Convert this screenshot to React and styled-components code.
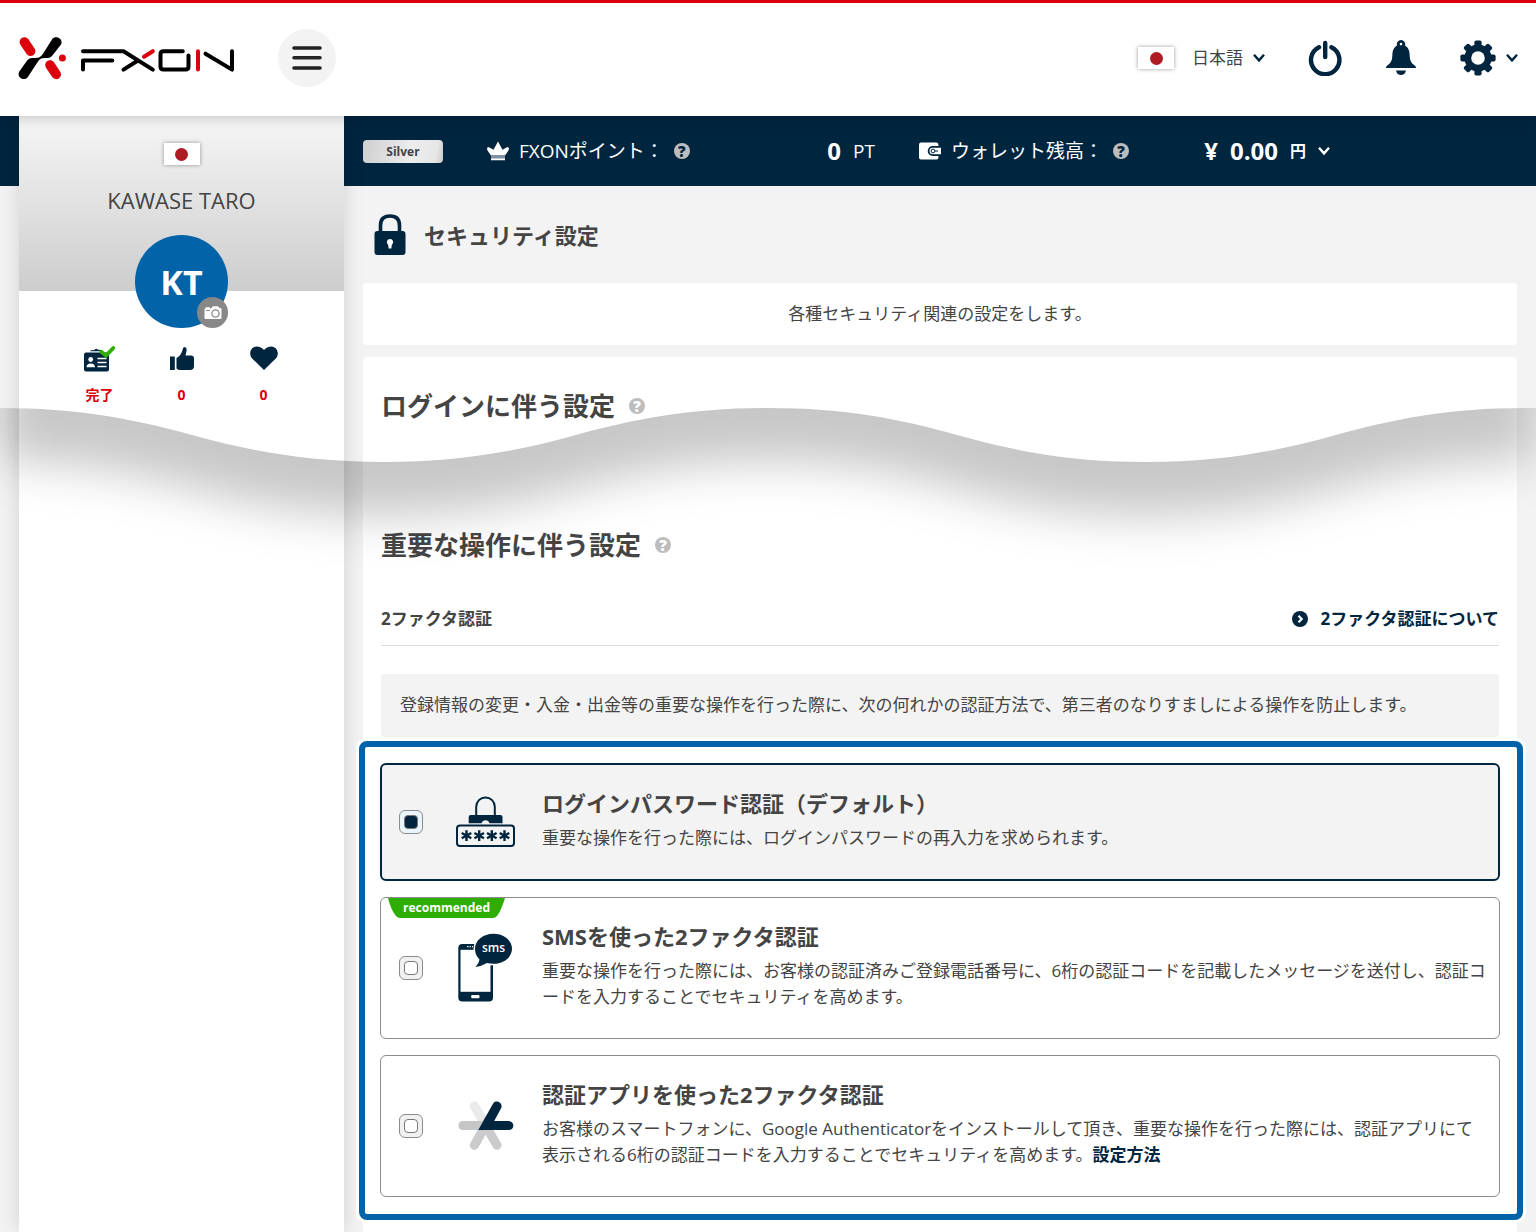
import React, { useState } from "react";
import styled, { createGlobalStyle } from "styled-components";

const navy = "#00253f";
const text = "#444444";
const red = "#dc000c";
const blue = "#0363a9";
const pale = "#f3f3f3";

const GlobalStyle = createGlobalStyle`
  *, *::before, *::after { box-sizing: border-box; }
  body {
    margin: 0;
    background: ${pale};
    color: ${text};
    font-family: "Open Sans", "Noto Sans CJK JP", sans-serif;
    font-size: 17px;
    line-height: 26px;
  }
  h1, h2, h3, p { margin: 0; }
  svg { display: block; flex: none; }
  button {
    border: 0;
    padding: 0;
    background: none;
    color: inherit;
    font: inherit;
    cursor: pointer;
  }
`;

const Page = styled.div`
  position: relative;
  display: flex;
  flex-direction: column;
  min-height: 100vh;
  overflow: hidden;
`;

const Header = styled.header`
  position: relative;
  z-index: 2;
  display: flex;
  align-items: center;
  height: 116px;
  padding: 0 18px 3px;
  border-top: 3px solid ${red};
  background: #fff;
  box-shadow: 0 2px 12px rgba(0, 0, 0, 0.2);
`;

const MenuButton = styled.button`
  display: grid;
  place-items: center;
  width: 58px;
  height: 58px;
  margin-left: 42px;
  border-radius: 50%;
  background: ${pale};
`;

const HeaderTools = styled.div`
  display: flex;
  align-items: center;
  gap: 43px;
  margin-left: auto;
  color: ${navy};
`;

const Language = styled.label`
  display: flex;
  align-items: center;
  gap: 18px;
`;

const SelectWrap = styled.span`
  position: relative;
  display: block;

  svg {
    position: absolute;
    right: 0;
    top: 9px;
    pointer-events: none;
  }
`;

const LanguageSelect = styled.select`
  appearance: none;
  display: block;
  height: 28px;
  padding: 0 22px 0 0;
  border: 0;
  background: none;
  color: ${text};
  font: inherit;
`;

const IconButton = styled.button`
  display: flex;
  align-items: center;
  gap: 10px;
`;

const FlagBox = styled.span`
  display: grid;
  place-items: center;
  width: 36px;
  height: 22px;
  background: #fff;
  box-shadow: 0 0 4px rgba(0, 0, 0, 0.4);

  &::before {
    content: "";
    width: 13px;
    height: 13px;
    border-radius: 50%;
    background: #ae1b22;
  }
`;

const Body = styled.div`
  flex: 1;
  display: flex;
  gap: 19px;
  padding: 0 19px;
  background: linear-gradient(${navy} 70px, ${pale} 70px);
`;

const Sidebar = styled.aside`
  flex: none;
  display: flex;
  flex-direction: column;
  align-items: center;
  width: 325px;
  padding-top: 27px;
  background: linear-gradient(#f6f6f6, #cdcdcd) 0 0 / 100% 175px no-repeat #fff;
  box-shadow: 0 0 20px rgba(0, 0, 0, 0.14);
`;

const UserName = styled.p`
  margin: 20px 0;
  font-size: 22px;
  line-height: 30px;
`;

const Avatar = styled.div`
  position: relative;
  display: grid;
  place-items: center;
  width: 93px;
  height: 93px;
  border-radius: 50%;
  background: ${blue};
  color: #fff;
  font-size: 34px;
  font-weight: 700;
`;

const CameraButton = styled.button`
  position: absolute;
  right: 0;
  bottom: 0;
  display: grid;
  place-items: center;
  width: 31px;
  height: 31px;
  border-radius: 50%;
  background: #888;
`;

const Stats = styled.div`
  display: grid;
  grid-template-columns: repeat(3, 82px);
  margin-top: 18px;
`;

const Stat = styled.div`
  display: flex;
  flex-direction: column;
  align-items: center;
  gap: 13px;
  color: ${red};
  font-size: 14px;
  font-weight: 700;
  line-height: 20px;
`;

const Main = styled.main`
  flex: 1;
  min-width: 0;
  display: flex;
  flex-direction: column;
`;

const AccountBar = styled.div`
  display: flex;
  align-items: center;
  gap: 44px;
  height: 70px;
  color: #fff;
  font-size: 19px;
`;

const RankButton = styled.button`
  width: 80px;
  height: 23px;
  border-radius: 4px;
  background: linear-gradient(100deg, #cfcfcf, #ededed 60%, #e6e6e6 90%, #c8c8c8);
  color: ${text};
  font-size: 12px;
  font-weight: 700;
  line-height: 23px;
`;

const Balance = styled.div`
  display: flex;
  align-items: center;
  justify-content: space-between;
  width: ${(p) => p.$width};
`;

const BalanceLabel = styled.span`
  display: flex;
  align-items: center;
  gap: 10px;
`;

const BalanceValue = styled.span`
  display: flex;
  align-items: center;
  gap: 12px;
`;

const CurrencyButton = styled.button`
  display: flex;
  align-items: center;
  gap: 12px;
  font-size: 16px;
  font-weight: 700;
`;

const Amount = styled.strong`
  font-size: 24px;
  font-weight: 700;
`;

const HelpButton = styled.button`
  display: grid;
  place-items: center;
  width: 16px;
  height: 16px;
  border-radius: 50%;
  background: #bdbdbd;
  color: ${(p) => p.$ink};
  font-size: 15px;
  font-weight: 800;
  line-height: 16px;
`;

const PageTitle = styled.h1`
  display: flex;
  align-items: center;
  gap: 18px;
  height: 97px;
  padding-left: 11px;
  font-size: 22px;
  line-height: 32px;
`;

const Intro = styled.p`
  padding: 18px;
  border-radius: 4px;
  background: #fff;
  text-align: center;
`;

const Panel = styled.section`
  flex: 1;
  margin-top: 12px;
  padding: 30px 18px 12px;
  border-radius: 4px 4px 0 0;
  background: #fff;
`;

const SectionTitle = styled.h2`
  display: flex;
  align-items: center;
  gap: 14px;
  margin-top: ${(p) => (p.$spaced ? "101px" : "0")};
  font-size: 26px;
  line-height: 38px;
`;

const SubHeading = styled.div`
  display: flex;
  align-items: center;
  justify-content: space-between;
  height: 54px;
  margin: 28px 0;
  border-bottom: 1px solid #dcdcdc;
`;

const SubTitle = styled.h3`
  font-size: 17px;
`;

const AboutLink = styled.a`
  display: flex;
  align-items: center;
  gap: 12px;
  color: ${navy};
  font-weight: 700;
  text-decoration: none;
`;

const Notice = styled.p`
  padding: 18px 19px 19px;
  border-radius: 4px;
  background: ${pale};
`;

const Highlight = styled.div`
  display: flex;
  flex-direction: column;
  gap: 16px;
  margin: 4px -24px 0 -22px;
  padding: 16px 17px 17px 15px;
  border: 6px solid ${blue};
  border-radius: 8px;
  background: #fff;
  box-shadow: 0 0 0 3px #fff;
`;

const Option = styled.div`
  position: relative;
  display: flex;
  align-items: center;
  padding: ${(p) => (p.$selected ? "0 11px 0 17px" : "0 12px 0 18px")};
  border: ${(p) => (p.$selected ? `2px solid ${navy}` : "1px solid #8c8c8c")};
  border-radius: 6px;
  background: ${(p) => (p.$selected ? pale : "#fff")};
`;

const Radio = styled.input`
  appearance: none;
  flex: none;
  display: grid;
  place-items: center;
  width: 24px;
  height: 24px;
  margin: 0;
  border: 1px solid #8c8c8c;
  border-radius: 6px;
  background: #f1f1f1;

  &::before {
    content: "";
    width: 14px;
    height: 14px;
    border: 1px solid #777;
    border-radius: 4px;
    background: #fff;
  }

  &:checked { background: #eaf4fb; }
  &:checked::before { background: ${navy}; }
`;

const OptionIcon = styled.span`
  flex: none;
  width: 60px;
  margin: 0 26px 0 33px;
`;

const OptionText = styled.div`
  flex: 1;
  padding: 22px 0 28px;
  line-break: loose;
`;

const OptionTitle = styled.label`
  display: block;
  margin-bottom: 6px;
  font-size: 22px;
  font-weight: 700;
  line-height: 32px;
`;

const InlineLink = styled.a`
  color: ${navy};
  font-weight: 700;
  text-decoration: none;
`;

const Badge = styled.span`
  position: absolute;
  left: 7px;
  top: 0;
  width: 117px;
  height: 20px;
  background: #2eae03;
  clip-path: path("M0 0H117Q113 13 109 18Q107 20 105 20H12Q10 20 8 18Q3 12 0 0Z");
  color: #fff;
  font-size: 12px;
  font-weight: 700;
  line-height: 20px;
  text-align: center;
`;

const Wave = styled.svg`
  position: absolute;
  left: 0;
  top: 408px;
  width: 100%;
  height: 200px;
  pointer-events: none;
`;

const Logo = () => (
  <svg width="218" height="45" viewBox="18 36 218 45" role="img" aria-label="FXON">
    <g fill="none" strokeLinecap="round" strokeWidth="9.6">
      <path d="M24.4 42L30.6 51.2M50 65L56.2 74.4" stroke={red} />
    </g>
    <circle cx="62.4" cy="58.1" r="3.5" fill={red} />
    <path d="M52.3 39C55 34.800 64 38.500 61 44.500L52 56Q50.500 58 47.500 58Q42.500 57.800 41 58.500Q38.500 60 37 63L27.700 77.300C24.500 81.500 16 77.700 19.300 71.600L27.500 60Q29.300 58 32 58Q37 58.300 39 57.600Q41 57 43.200 53.600Z" fill="#000" />
    <g fill="none" stroke="#000" strokeWidth="4" strokeLinecap="round" strokeLinejoin="round">
      <path d="M83 51.200H123.500L152.800 69.600M83 69.600V60.400H112.300M123.500 69.600L138 60.500" />
      <path d="M182.800 51.200H163.500Q160.500 51.200 160.500 54.200V66.600Q160.500 69.600 163.500 69.600H185.500Q188.500 69.600 188.500 66.600V55.500" />
      <path d="M205.500 53.700L232 69.600V51.200" />
    </g>
    <path d="M144 56.800L152.800 51.200M198 51.200V69.600" fill="none" stroke={red} strokeWidth="4" strokeLinecap="round" />
  </svg>
);

const Chevron = () => (
  <svg width="12" height="10" viewBox="0 0 12 10" fill="none" stroke="currentColor" strokeWidth="2.400">
    <path d="M1 1.800L6 7.400L11 1.800" />
  </svg>
);

const PowerIcon = () => (
  <svg width="34" height="36" viewBox="0 0 34 36" fill="none" stroke="currentColor" strokeWidth="4.400" strokeLinecap="round">
    <path d="M11 7.200A14.200 14.200 0 1 0 23.400 7.200M17.200 3V17" />
  </svg>
);

const BellIcon = () => (
  <svg width="32" height="36" viewBox="-1 0 32 36" fill="currentColor">
    <path fillRule="evenodd" d="M15 0a4.200 4.200 0 0 1 4 5.500C22 7 23.500 10.500 23.600 14C23.800 20 24.500 22.500 28.500 25.200Q30.200 26.500 30 28H0Q-.2 26.500 1.500 25.200C5.500 22.500 6.200 20 6.400 14C6.500 10.500 8 7 11 5.500A4.200 4.200 0 0 1 15 0ZM15 2.800a1.300 1.300 0 1 0 0 2.600a1.300 1.300 0 0 0 0-2.600Z" />
    <path d="M10 30.400H20Q18.800 35 15 35T10 30.400Z" />
  </svg>
);

const GearIcon = () => (
  <svg width="36" height="36" viewBox="-18 -18 36 36">
    <g fill="currentColor">
      {[0, 45, 90, 135].map((a) => (
        <rect key={a} x="-3.600" y="-17.600" width="7.200" height="35.200" rx="1.800" transform={`rotate(${a})`} />
      ))}
      <circle r="13.600" />
    </g>
    <circle r="6.800" fill="#fff" />
  </svg>
);

const CameraIcon = () => (
  <svg width="18" height="14" viewBox="0 0 18 14">
    <path d="M1.500 2.500V1.300H6V2.500H7L9 .3H14L15.500 2H16.500Q17.500 2 17.500 3V12Q17.500 13 16.500 13H1.500Q.5 13 .5 12V3.500Q.5 2.500 1.500 2.500Z" fill="#fff" />
    <circle cx="11.500" cy="7.500" r="3.600" fill="none" stroke="#888" strokeWidth="1.300" />
    <path d="M2.200 4.500H5.800" stroke="#888" />
  </svg>
);

const IdCardIcon = () => (
  <svg width="32" height="26" viewBox="0 0 32 26">
    <path d="M6 5.500Q6 4.300 7.500 4.200L10.500 4Q12 1.500 14 3.700L18 4V5.300H6Z" fill={navy} />
    <rect x="0" y="6.500" width="25" height="19" rx="2" fill={navy} />
    <circle cx="6.700" cy="13.500" r="2.400" fill="#fff" />
    <path d="M2.500 21.300Q2.500 17.500 6.700 17.500T11 21.300Z" fill="#fff" />
    <path d="M13.500 12.500H22.500M13.500 16.500H22.500M13.500 20.500H22.500" stroke="#fff" strokeWidth="1.600" />
    <path d="M17.300 5.700L22 9.600L29.300 2" fill="none" stroke="#2eae03" strokeWidth="3.800" strokeLinecap="round" />
  </svg>
);

const ThumbIcon = () => (
  <svg width="24" height="26" viewBox="0 0 24 26" fill={navy}>
    <rect x="0" y="10.500" width="4.800" height="13.500" />
    <path d="M6.500 12Q11.500 9 12.500 4Q13 1 14.500 1Q17.500 1.500 16.300 6L15.500 9.500H21Q24 9.500 24 12.500V20Q24 24 20 24H10Q8 24 6.500 22.500Z" />
  </svg>
);

const HeartIcon = () => (
  <svg width="28" height="26" viewBox="0 0 28 26" fill={navy}>
    <path d="M14 24L2.200 12.500C-1.500 8.500 0 1 6.800 .5Q11 .5 14 4Q17 .5 21.200 .5C28 1 29.500 8.500 25.800 12.500Z" />
  </svg>
);

const CrownIcon = () => (
  <svg width="22" height="20" viewBox="0 0 22 20" fill="#fff">
    <path d="M4 14.500L.5 9.500Q-.8 5.500 2 6.300L6.500 8.800L11 .5L15.500 8.800L20 6.300Q22.800 5.500 21.500 9.500L18 14.500ZM4 15.500H18V16.500H4ZM4 17.300H18V19.200H4Z" />
  </svg>
);

const WalletIcon = () => (
  <svg width="22" height="18" viewBox="0 0 22 18">
    <path d="M2 .5H17.500Q19.500 .5 19.500 3V15Q19.500 17.500 17.500 17.500H2Q0 17.500 0 15.500V2.500Q0 .5 2 .5Z" fill="#fff" />
    <path d="M23 4.800H13.800A4.200 4.200 0 0 0 13.800 13.200H23" fill="#fff" stroke={navy} strokeWidth="1.800" />
    <circle cx="14" cy="9" r="1.900" fill="none" stroke={navy} strokeWidth="1" />
    <path d="M15.900 9H19" stroke={navy} strokeWidth="1" />
  </svg>
);

const LockIcon = () => (
  <svg width="32" height="42" viewBox="0 0 32 42">
    <path d="M6.500 20V11.500Q6.500 2 16 2T25.500 11.500V20" fill="none" stroke={navy} strokeWidth="3.600" />
    <rect x=".5" y="17" width="31" height="24" rx="3" fill={navy} />
    <path d="M16 25a3.300 3.300 0 0 1 1.800 6L17.300 34.500H14.700L14.200 31A3.300 3.300 0 0 1 16 25Z" fill="#fff" />
  </svg>
);

const ArrowBullet = () => (
  <svg width="16" height="16" viewBox="0 0 16 16">
    <circle cx="8" cy="8" r="8" fill={navy} />
    <path d="M6.500 4.800L9.700 8L6.500 11.200" fill="none" stroke="#fff" strokeWidth="2.200" />
  </svg>
);

const PasswordIcon = () => (
  <svg width="60" height="52" viewBox="0 0 60 52">
    <path d="M20.200 20V10.700A9.300 9.300 0 0 1 38.800 10.700V20" fill="none" stroke={navy} strokeWidth="2" />
    <path d="M14.700 19H44.500Q46.500 19 46.500 21V27.300H33.500Q32.500 24.300 29.500 24.300T25.500 27.300H12.700V21Q12.700 19 14.700 19Z" fill={navy} />
    <rect x="1" y="29.500" width="57" height="20.500" rx="3" fill={pale} stroke={navy} strokeWidth="2" />
    <g stroke={navy} strokeWidth="2.400">
      {[10.5, 23.2, 35.8, 48.5].map((x) => (
        <path key={x} d={`M${x} 34.200V45M${x - 4.8} 37L${x + 4.8} 42.200M${x + 4.8} 37L${x - 4.8} 42.200`} />
      ))}
    </g>
  </svg>
);

const SmsIcon = () => (
  <svg width="60" height="72" viewBox="0 0 60 72">
    <rect x="2.300" y="12" width="34.700" height="57.500" rx="4" fill={navy} />
    <rect x="4.500" y="17.800" width="30" height="42" fill="#fff" />
    <rect x="15.200" y="63" width="8.300" height="3.200" rx="1" fill="#fff" />
    <path d="M11 14.600H17" stroke="#fff" strokeWidth="1.200" strokeDasharray="1.500 1" />
    <path d="M37.500 1.800C48 1.800 56 8.500 56 16.800S48 31.800 37.500 31.800Q34 31.800 31 31Q26 34 19.500 35Q23 31.500 23.500 27.500Q19 23 19 16.800C19 8.500 27 1.800 37.500 1.800Z" fill={navy} stroke="#fff" strokeWidth="3" paintOrder="stroke" />
    <text x="37.500" y="20" textAnchor="middle" fill="#fff" fontSize="12" fontWeight="600">sms</text>
  </svg>
);

const AuthenticatorIcon = () => (
  <svg width="60" height="50" viewBox="0 0 60 50" fill="none" strokeWidth="9.200" strokeLinecap="round">
    <path d="M18.400 4.800L29.500 24.500" stroke="#ebebeb" />
    <path d="M7 24.500H29.500" stroke="#c6c6c6" />
    <path d="M18.400 44.200L29.500 24.500L41 44.200" stroke="#cbcbcb" />
    <path d="M22.300 29.100L37.100 2.600C39.500 -2 47.500 1.800 45.200 7L38.200 19.900H52.500C59 20 59 29 52.500 29.100Z" fill={navy} />
  </svg>
);

const options = [
  {
    id: "password",
    title: "ログインパスワード認証（デフォルト）",
    body: "重要な操作を行った際には、ログインパスワードの再入力を求められます。",
    Icon: PasswordIcon,
  },
  {
    id: "sms",
    title: "SMSを使った2ファクタ認証",
    body: "重要な操作を行った際には、お客様の認証済みご登録電話番号に、6桁の認証コードを記載したメッセージを送付し、認証コードを入力することでセキュリティを高めます。",
    badge: "recommended",
    Icon: SmsIcon,
  },
  {
    id: "app",
    title: "認証アプリを使った2ファクタ認証",
    body: "お客様のスマートフォンに、Google Authenticatorをインストールして頂き、重要な操作を行った際には、認証アプリにて表示される6桁の認証コードを入力することでセキュリティを高めます。",
    link: "設定方法",
    Icon: AuthenticatorIcon,
  },
];

const curve = (dy) =>
  `V${dy}H1526C1449 ${dy} 1394 ${dy + 11} 1336 ${dy + 27}S1222 ${dy + 54} 1146 ${dy + 54}S1014 ${dy + 43} 957 ${dy + 27}S845 ${dy} 768 ${dy}S634 ${dy + 11} 576 ${dy + 27}S461 ${dy + 54} 384 ${dy + 54}S250 ${dy + 43} 192 ${dy + 27}S77 ${dy} 0 ${dy}`;

const TornEdge = () => (
  <Wave viewBox="0 0 1536 200" preserveAspectRatio="none" aria-hidden="true">
    <defs>
      <clipPath id="below">
        <path d={`M0 200H1536${curve(0)}Z`} />
      </clipPath>
      <filter id="soft" x="-10%" y="-50%" width="120%" height="200%">
        <feGaussianBlur stdDeviation="24" />
      </filter>
    </defs>
    <g clipPath="url(#below)">
      <path d={`M0 -120H1536${curve(53)}Z`} fill="#000" fillOpacity="0.220" filter="url(#soft)" />
    </g>
  </Wave>
);

const Help = ({ ink = "#fff", label }) => (
  <HelpButton type="button" $ink={ink} aria-label={label}>?</HelpButton>
);

export default function App() {
  const [selected, setSelected] = useState("password");

  return (
    <Page lang="ja">
      <GlobalStyle />
      <Header>
        <Logo />
        <MenuButton type="button" aria-label="メニュー">
          <svg width="30" height="26" viewBox="0 0 30 26" stroke="#222" strokeWidth="3.600" strokeLinecap="round">
            <path d="M2 3H28M2 12.700H28M2 23H28" />
          </svg>
        </MenuButton>
        <HeaderTools>
          <Language>
            <FlagBox />
            <SelectWrap>
              <LanguageSelect aria-label="言語">
                <option>日本語</option>
              </LanguageSelect>
              <Chevron />
            </SelectWrap>
          </Language>
          <IconButton type="button" aria-label="ログアウト"><PowerIcon /></IconButton>
          <IconButton type="button" aria-label="お知らせ"><BellIcon /></IconButton>
          <IconButton type="button" aria-label="設定"><GearIcon /><Chevron /></IconButton>
        </HeaderTools>
      </Header>

      <Body>
        <Sidebar>
          <FlagBox />
          <UserName>KAWASE TARO</UserName>
          <Avatar>
            KT
            <CameraButton type="button" aria-label="写真を変更"><CameraIcon /></CameraButton>
          </Avatar>
          <Stats>
            <Stat><IdCardIcon />完了</Stat>
            <Stat><ThumbIcon />0</Stat>
            <Stat><HeartIcon />0</Stat>
          </Stats>
        </Sidebar>

        <Main>
          <AccountBar>
            <RankButton type="button">Silver</RankButton>
            <Balance $width="388px">
              <BalanceLabel>
                <CrownIcon />
                FXONポイント：
                <Help ink={navy} label="ポイントのヘルプ" />
              </BalanceLabel>
              <BalanceValue><Amount>0</Amount>PT</BalanceValue>
            </Balance>
            <Balance $width="411px">
              <BalanceLabel>
                <WalletIcon />
                ウォレット残高：
                <Help ink={navy} label="残高のヘルプ" />
              </BalanceLabel>
              <BalanceValue>
                <Amount>¥</Amount>
                <Amount>0.00</Amount>
                <CurrencyButton type="button">円<Chevron /></CurrencyButton>
              </BalanceValue>
            </Balance>
          </AccountBar>

          <PageTitle><LockIcon />セキュリティ設定</PageTitle>
          <Intro>各種セキュリティ関連の設定をします。</Intro>

          <Panel>
            <SectionTitle>ログインに伴う設定<Help label="ログイン設定のヘルプ" /></SectionTitle>
            <SectionTitle $spaced>重要な操作に伴う設定<Help label="操作設定のヘルプ" /></SectionTitle>
            <SubHeading>
              <SubTitle>2ファクタ認証</SubTitle>
              <AboutLink href="#about"><ArrowBullet />2ファクタ認証について</AboutLink>
            </SubHeading>
            <Notice>
              登録情報の変更・入金・出金等の重要な操作を行った際に、次の何れかの認証方法で、第三者のなりすましによる操作を防止します。
            </Notice>
            <Highlight>
              {options.map(({ id, title, body, badge, link, Icon }) => (
                <Option key={id} $selected={selected === id}>
                  {badge && <Badge>{badge}</Badge>}
                  <Radio
                    type="radio"
                    name="method"
                    id={id}
                    checked={selected === id}
                    onChange={() => setSelected(id)}
                  />
                  <OptionIcon><Icon /></OptionIcon>
                  <OptionText>
                    <OptionTitle htmlFor={id}>{title}</OptionTitle>
                    <p>
                      {body}
                      {link && <InlineLink href="#setup">{link}</InlineLink>}
                    </p>
                  </OptionText>
                </Option>
              ))}
            </Highlight>
          </Panel>
        </Main>
      </Body>
      <TornEdge />
    </Page>
  );
}
